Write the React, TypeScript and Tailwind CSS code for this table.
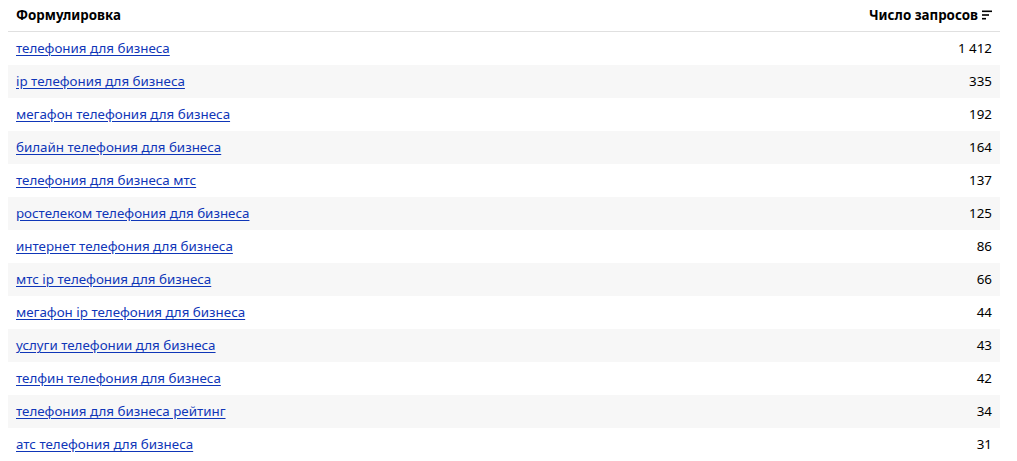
import React from 'react';

const rows: [string, string][] = [
  ['телефония для бизнеса', '1 412'],
  ['ip телефония для бизнеса', '335'],
  ['мегафон телефония для бизнеса', '192'],
  ['билайн телефония для бизнеса', '164'],
  ['телефония для бизнеса мтс', '137'],
  ['ростелеком телефония для бизнеса', '125'],
  ['интернет телефония для бизнеса', '86'],
  ['мтс ip телефония для бизнеса', '66'],
  ['мегафон ip телефония для бизнеса', '44'],
  ['услуги телефонии для бизнеса', '43'],
  ['телфин телефония для бизнеса', '42'],
  ['телефония для бизнеса рейтинг', '34'],
  ['атс телефония для бизнеса', '31'],
];

const SortIcon = () => (
  <svg width="10" height="10" viewBox="0 0 10 10" className="ml-1">
    <rect x="0" y="0.5" width="10" height="1.6" fill="#000" />
    <rect x="0" y="4.2" width="7" height="1.6" fill="#000" />
    <rect x="0" y="7.9" width="4" height="1.6" fill="#000" />
  </svg>
);

export default function App() {
  return (
    <div className="bg-white pl-2 pr-[17px] text-[13.35px] text-black" style={{ fontFamily: '"Noto Sans", "Liberation Sans", sans-serif' }}>
      <div className="flex items-center justify-between h-[32px] px-2 border-b border-[#e0e0e0] font-bold">
        <span>Формулировка</span>
        <span className="flex items-center">
          Число запросов <SortIcon />
        </span>
      </div>
      {rows.map(([q, n], i) => (
        <div
          key={i}
          className={`flex items-center justify-between h-[33px] px-2 ${i % 2 === 1 ? 'bg-[#f7f7f7]' : 'bg-white'}`}
        >
          <a href="#" className="text-[#0f36b8] underline underline-offset-2">{q}</a>
          <span>{n}</span>
        </div>
      ))}
    </div>
  );
}
